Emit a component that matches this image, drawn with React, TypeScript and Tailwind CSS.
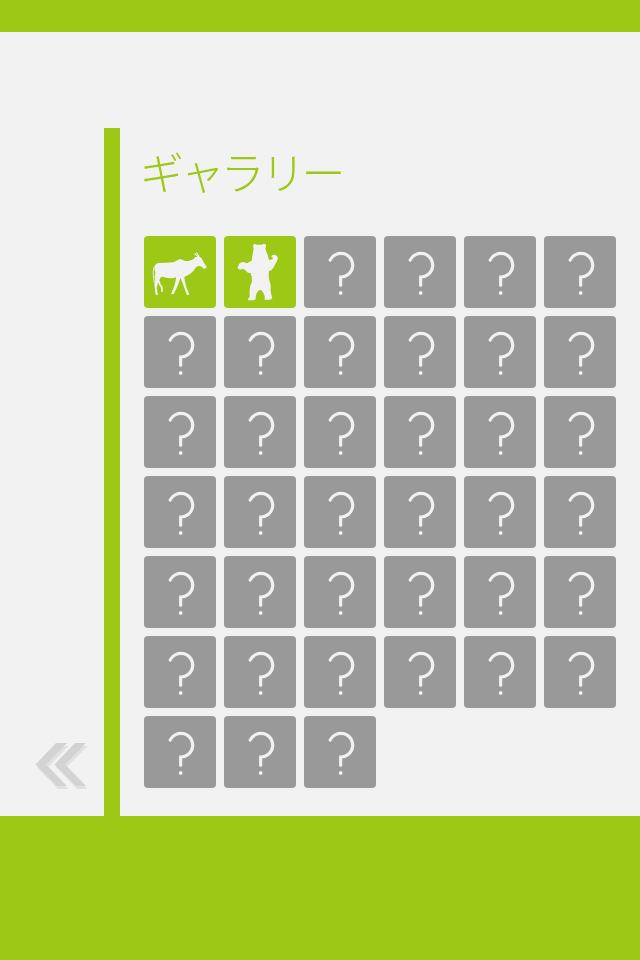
import type { ReactNode } from "react";
import { twMerge } from "tailwind-merge";

interface Item {
  id: number;
  name: string | null;
}

const TOTAL = 39;

const unlocked: Record<number, string> = {
  0: "antelope",
  1: "bear",
};

const items: Item[] = Array.from({ length: TOTAL }, (_, i) => ({
  id: i,
  name: unlocked[i] ?? null,
}));

// tile art is drawn at 3 units per pixel
const art: Record<string, ReactNode> = {
  antelope: (
    <g fill="#f2f2f2">
      <path d="M199 109L191 110L183 103L174 102L168 106L160 117L150 126L140 131L133 135L134 144L139 165L148 188L141 189L136 176L128 154L121 137L117 151L109 170L101 186L93 187L97 177L103 161L107 146L108 136L98 139L82 138L68 134L62 136L58 145L63 158L68 165L69 179L64 180L63 167L54 152L50 168L54 188L47 189L45 173L43 156L46 145L44 134L46 122L43 112L44 103L48 96L54 93L79 92L101 91L113 84L120 81L126 83L136 87L147 87L160 82L166 75L173 75L163 67L165 63L170 69L174 71L166 59L173 64L180 76L185 78L187 84L193 94L199 103Z" />
      <path
        d="M46 101C38 110 40 120 40 130Q41 140 43 151"
        fill="none"
        stroke="#f2f2f2"
        strokeWidth="3"
      />
    </g>
  ),
  bear: (
    <path
      fill="#f2f2f2"
      d="M101 37L106 36L110 38L126 38L132 35L138 38L138 44L136 49L139 59L143 68L145 78L148 84L157 82L160 78L154 75L156 70L163 68L170 71L174 78L171 87L166 96L161 106L154 115L147 117L146 127L147 141L152 159L152 178L155 191L157 199L151 203L134 203L134 192L130 182L124 174L117 175L110 183L107 194L107 202L100 205L85 205L84 200L89 195L89 174L91 161L96 149L95 134L92 123L84 122L76 115L71 111L62 112L59 115L58 110L54 111L53 107L57 96L64 91L72 90L80 94L95 86L96 78L99 61L101 50L99 42Z"
    />
  ),
};

function LockedMark() {
  return (
    <g fill="none" stroke="#f2f2f2" strokeWidth="9.5" strokeLinecap="round">
      <path d="M90.5 84.5A35.500 35.500 0 1 1 122 135V159.500" />
      <path d="M122 182.5V184" strokeWidth="10.5" />
    </g>
  );
}

function Tile({ item }: { item: Item }) {
  return (
    <button
      aria-label={item.name ?? "locked"}
      className={twMerge(
        "size-[72px] rounded bg-[#999999]",
        item.name && "bg-[#9dc815]"
      )}
    >
      <svg viewBox="12 12 216 216" className="size-full">
        {item.name ? art[item.name] : <LockedMark />}
      </svg>
    </button>
  );
}

function BackIcon() {
  return (
    <svg viewBox="0 0 54 48" className="w-[54px] h-12">
      <g fill="#e1e1e1">
        <path d="M23 4H33.500L13 25L33 47H23L2 25Z" />
        <path d="M42 4H52.500L32 25L52 47H42L21 25Z" />
      </g>
      <g fill="#d3d3d3">
        <path d="M21 1H32L11 22.500L32 44H22L0.500 22.500Z" />
        <path d="M40 1H51L30 22.500L51 44H41L19.500 22.500Z" />
      </g>
    </svg>
  );
}

export default function App() {
  return (
    <div className="w-[640px] h-[960px] flex flex-col bg-[#f2f2f2] overflow-hidden">
      <header className="h-8 shrink-0 bg-[#9dc815]" />

      <div className="flex h-[784px]">
        <aside className="w-[104px] flex flex-col justify-end pl-[35px] pb-[26px]">
          <button aria-label="back">
            <BackIcon />
          </button>
        </aside>
        <div className="w-4 mt-24 bg-[#9dc815]" />

        <main className="pl-6 pt-24">
          <h1 className="h-[108px] pt-[15px] -ml-[4px] text-[44px] leading-[56px] tracking-[-3.6px] font-light text-[#9dc815] font-['Noto_Sans_CJK_JP',sans-serif] whitespace-nowrap will-change-transform">
            ギャラリー
          </h1>
          <div className="grid grid-cols-6 gap-2">
            {items.map((item) => (
              <Tile key={item.id} item={item} />
            ))}
          </div>
        </main>
      </div>

      <footer className="flex-1 bg-[#9dc815]" />
    </div>
  );
}
